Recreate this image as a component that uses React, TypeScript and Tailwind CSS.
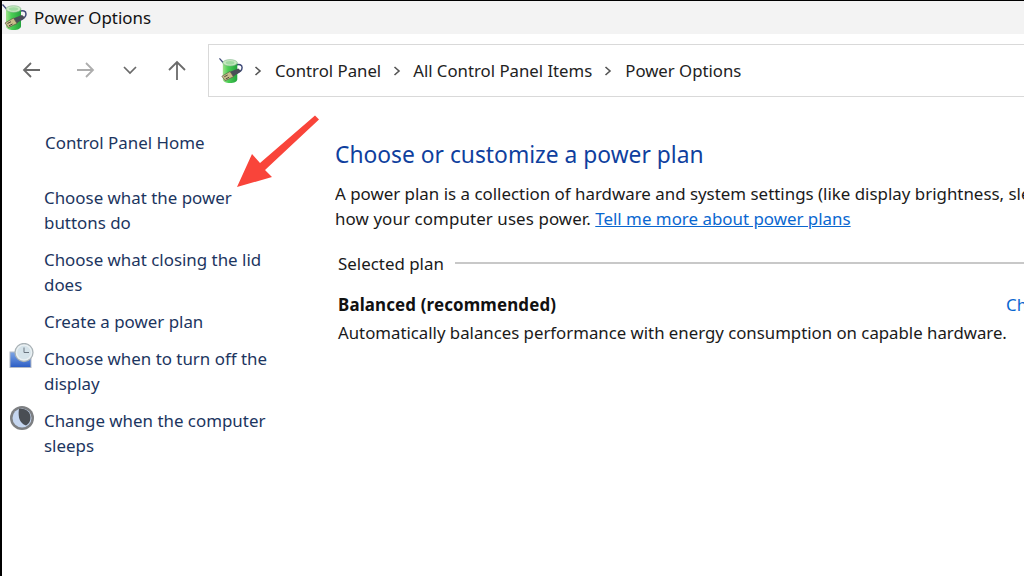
import React from "react";

const font = { fontFamily: '"Noto Sans", "Open Sans", sans-serif' };

function Battery({ size = 28, id }: { size?: number; id: string }) {
  return (
    <svg width={size} height={size} viewBox="0 0 28 28" className="shrink-0">
      <defs>
        <linearGradient id={id} x1="0" x2="1" y1="0" y2="0">
          <stop offset="0" stopColor="#9fe08a" />
          <stop offset="0.35" stopColor="#4ccf55" />
          <stop offset="1" stopColor="#23a23c" />
        </linearGradient>
      </defs>
      <path d="M18 8.500c4-1.500 7-.5 7 2.500 0 3-2.500 5-6.500 6.500" fill="none" stroke="#3f4a78" strokeWidth="1.500" />
      <path d="M1.500 1.500l4 4.500" stroke="#3f4a78" strokeWidth="1.300" />
      <path d="M5 6h15v17c0 2.500-3 4-7.500 4S5 25.500 5 23z" fill={`url(#${id})`} />
      <ellipse cx="12.500" cy="6" rx="7.500" ry="3.300" fill="#c7e8c0" stroke="#7fb48a" strokeWidth="0.600" />
      <ellipse cx="12.500" cy="6" rx="4.500" ry="1.800" fill="#9ed9a0" />
      <path d="M12 15.500l9-3.500 3 2.500-8.500 6z" fill="#4a4e58" />
      <path d="M4 20l8.500-5 3.500 5.500-8.500 4z" fill="#c9bc8a" stroke="#5d5a45" strokeWidth="0.700" />
      <path d="M6.500 20.500l3.500-1.800M8 22.800l3.500-1.800" stroke="#4a4a3a" strokeWidth="1" />
    </svg>
  );
}

function Clock() {
  return (
    <svg width="26" height="26" viewBox="0 0 26 26" className="shrink-0">
      <defs>
        <linearGradient id="scr" x1="0" x2="0" y1="0" y2="1">
          <stop offset="0" stopColor="#7ea6e6" />
          <stop offset="1" stopColor="#2a5cc4" />
        </linearGradient>
      </defs>
      <rect x="1" y="9" width="21" height="15.500" fill="url(#scr)" stroke="#b3bac6" />
      <circle cx="15" cy="9.500" r="9" fill="#e9f0f3" stroke="#a9b2b6" strokeWidth="1.300" />
      <circle cx="15" cy="9.500" r="6.800" fill="#d5e3ea" />
      <path d="M15 4.500V9.500h5" fill="none" stroke="#6a7580" strokeWidth="1" />
    </svg>
  );
}

function Moon() {
  return (
    <svg width="26" height="26" viewBox="0 0 26 26" className="shrink-0">
      <circle cx="13" cy="13" r="12" fill="#7d7f82" />
      <circle cx="13" cy="13" r="9.500" fill="#c5d6f0" />
      <path d="M10 4c6-1 11 2 11.500 8 .2 4-1.500 7-4.500 8.500-3-1-6-3.500-7-8-.5-3-.5-6 0-8.500z" fill="#4a4e54" />
    </svg>
  );
}

function NavIcon({ d, color }: { d: string; color: string }) {
  return (
    <svg width="22" height="22" viewBox="0 0 22 22" fill="none" stroke={color} strokeWidth="1.800">
      <path d={d} />
    </svg>
  );
}

function Chevron() {
  return (
    <svg width="10" height="12" viewBox="0 0 10 12" fill="none" stroke="#555" strokeWidth="1.600">
      <path d="M2.500 2l4.500 4-4.500 4" />
    </svg>
  );
}

function SideLink({ lines, icon, inset }: { lines: string[]; icon?: React.ReactNode; inset?: boolean }) {
  return (
    <div className={`relative text-[#1c3560] text-[16.900px] leading-[25px] ${inset ? "pl-[43px]" : "pl-[42px]"}`}>
      {icon && <span className="absolute left-[7px] top-[-3px]">{icon}</span>}
      {lines.map((l) => (
        <div key={l}>{l}</div>
      ))}
    </div>
  );
}

export default function App() {
  return (
    <div
      className="relative w-[1024px] h-[576px] overflow-hidden bg-white border-l-2 border-t border-black flex flex-col"
      style={font}
    >
      <div className="h-[33px] bg-[#f3f3f3] flex items-center shrink-0 text-[16.900px] text-[#111]">
        <span className="ml-[-1px] mt-[-2px]">
          <Battery size={28} id="b1" />
        </span>
        <span className="ml-[5px]">Power Options</span>
      </div>

      <div className="h-[63px] flex shrink-0 items-start pt-[10px]">
        <div className="w-[206px] h-[52px] flex items-center shrink-0">
          <span className="ml-[19px]">
            <NavIcon color="#6a6a6a" d="M19 11H3M10 4l-7 7 7 7" />
          </span>
          <span className="ml-[31px]">
            <NavIcon color="#adadad" d="M3 11h16M12 4l7 7-7 7" />
          </span>
          <svg width="14" height="14" viewBox="0 0 14 14" fill="none" stroke="#6a6a6a" strokeWidth="1.700" className="ml-[27px]">
            <path d="M1 4l6 6 6-6" />
          </svg>
          <span className="ml-[29px]">
            <NavIcon color="#6a6a6a" d="M11 21V3M3 11l8-8 8 8" />
          </span>
        </div>
        <div className="flex-1 h-[53px] border border-r-0 border-[#d9d9d9] flex items-center text-[16.750px] text-[#222]">
          <span className="ml-[9px] mr-[8px]">
            <Battery size={27} id="b2" />
          </span>
          <Chevron />
          <span className="ml-[12px]">Control Panel</span>
          <span className="ml-[11px]"><Chevron /></span>
          <span className="ml-[11px]">All Control Panel Items</span>
          <span className="ml-[11px]"><Chevron /></span>
          <span className="ml-[12px]">Power Options</span>
        </div>
      </div>

      <div className="flex flex-1">
        <div className="w-[333px] shrink-0 pt-[33px] flex flex-col">
          <SideLink inset lines={["Control Panel Home"]} />
          <div className="h-[30px]" />
          <SideLink lines={["Choose what the power", "buttons do"]} />
          <div className="h-[12px]" />
          <SideLink lines={["Choose what closing the lid", "does"]} />
          <div className="h-[12px]" />
          <SideLink lines={["Create a power plan"]} />
          <div className="h-[12px]" />
          <SideLink icon={<Clock />} lines={["Choose when to turn off the", "display"]} />
          <div className="h-[12px]" />
          <SideLink icon={<Moon />} lines={["Change when the computer", "sleeps"]} />
        </div>
        <div className="flex-1 min-w-0 pt-[42px] overflow-hidden">
          <div className="text-[#0f3f9e] text-[22.800px] leading-[32px] whitespace-nowrap">Choose or customize a power plan</div>
          <div className="mt-[10px] text-[16.900px] leading-[25px] text-[#1a1a1a] whitespace-nowrap">
            A power plan is a collection of hardware and system settings (like display brightness, sleep, etc.) that manages
          </div>
          <div className="text-[16.900px] leading-[25px] text-[#1a1a1a] whitespace-nowrap">
            <span className="tracking-[0.1px]">how your computer uses power.</span>{" "}
            <span className="text-[#0a67d0] underline">Tell me more about power plans</span>
          </div>
          <div className="mt-[20px] ml-[3px] flex items-center text-[16.900px] leading-[25px] text-[#1a1a1a]">
            <span className="whitespace-nowrap">Selected plan</span>
            <span className="ml-[11px] flex-1 h-[2px] bg-[#c8c8c8] mt-[-2px]" />
          </div>
          <div className="mt-[16px] ml-[3px] flex items-center justify-between text-[16.900px] leading-[25px] whitespace-nowrap">
            <span className="font-bold text-[#111] tracking-[0.15px]">Balanced (recommended)</span>
            <span className="text-[#0a67d0] w-[18px] overflow-hidden">Change plan settings</span>
          </div>
          <div className="mt-[3px] ml-[3px] text-[16.800px] leading-[25px] text-[#1a1a1a] whitespace-nowrap">
            Automatically balances performance with energy consumption on capable hardware.
          </div>
        </div>
      </div>

      <svg className="absolute left-[233px] top-[112px]" width="86" height="74" viewBox="0 0 86 74">
        <path d="M80 2.500L84 6.500L30 57L37 64L2 74L17 41L25 50Z" fill="#f9443a" />
      </svg>
    </div>
  );
}
